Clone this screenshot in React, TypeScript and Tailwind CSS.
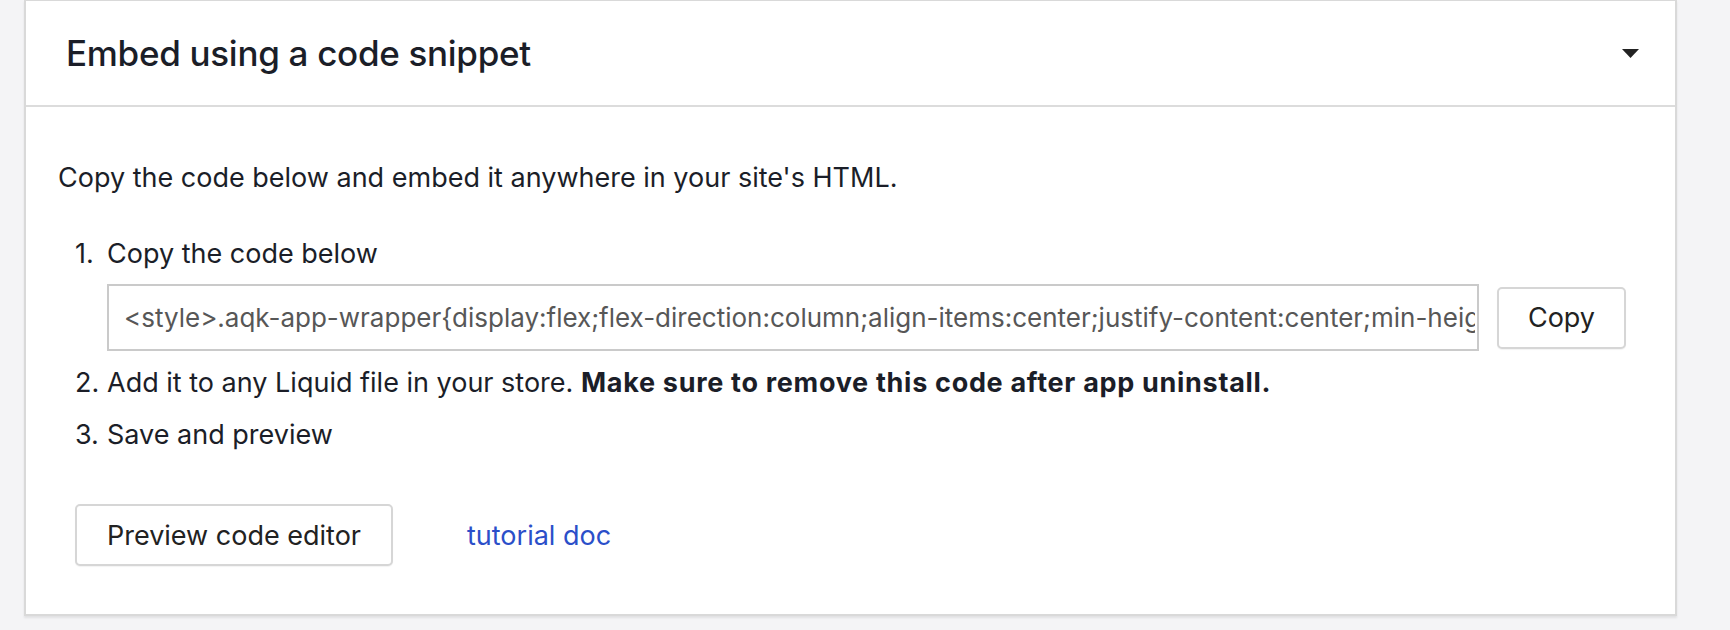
import React from "react";

export default function App() {
  const code =
    '<style>.aqk-app-wrapper{display:flex;flex-direction:column;align-items:center;justify-content:center;min-height:100%;width:100%}</style><div class="aqk-app-wrapper"></div>';
  return (
    <div
      className="min-h-[630px] w-full bg-[#f4f4f6] pl-[24px] text-[#1b1e28]"
      style={{ fontFamily: "Inter, 'Noto Sans', sans-serif" }}
    >
      <div className="w-[1653px] border-2 border-t border-[#d9d9d9] bg-white shadow-[0_2px_2px_rgba(0,0,0,0.08)]">
        <div className="flex h-[106px] items-center justify-between border-b-2 border-[#dcdcdc] pl-[40px] pr-[36px]">
          <h2 className="text-[35px] font-medium leading-none tracking-[-0.3px]">
            Embed using a code snippet
          </h2>
          <svg width="17" height="9" viewBox="0 0 17 9" className="mt-[1px]">
            <path d="M0 0 H17 L8.5 9 Z" fill="#222" />
          </svg>
        </div>
        <div className="pb-[48px] pl-[32px] pr-[48px] pt-[52px] text-[27px] leading-[37px]">
          <p>Copy the code below and embed it anywhere in your site's HTML.</p>
          <ol className="mt-[39px] pl-[17px]">
            <li className="flex">
              <span className="w-[32px] shrink-0">1.</span>
              <div className="flex-1">
                <div>Copy the code below</div>
                <div className="mt-[12px] flex items-center gap-[18px]">
                  <input
                    readOnly
                    value={code}
                    className="h-[67px] w-[1372px] border-2 border-[#cacaca] bg-white pl-[15px] pr-[2px] text-[26px] text-[#575757] outline-none"
                    style={{ fontFamily: "Inter, 'Noto Sans', sans-serif" }}
                  />
                  <button className="h-[62px] w-[129px] rounded-[5px] border-2 border-[#d6d6d6] bg-white text-[#222] shadow-[0_1px_1px_rgba(0,0,0,0.05)]">
                    Copy
                  </button>
                </div>
              </div>
            </li>
            <li className="mt-[13px] flex">
              <span className="w-[32px] shrink-0">2.</span>
              <span>
                Add it to any Liquid file in your store.{" "}
                <strong className="font-bold tracking-[0.7px]">
                  Make sure to remove this code after app uninstall.
                </strong>
              </span>
            </li>
            <li className="mt-[15px] flex">
              <span className="w-[32px] shrink-0">3.</span>
              <span>Save and preview</span>
            </li>
          </ol>
          <div className="mt-[51px] flex items-center pl-[17px]">
            <button className="h-[62px] w-[318px] rounded-[5px] border-2 border-[#d6d6d6] bg-white text-[#222] shadow-[0_1px_1px_rgba(0,0,0,0.05)]">
              Preview code editor
            </button>
            <a className="ml-[74px] text-[#2b4fc9]" href="#">
              tutorial doc
            </a>
          </div>
        </div>
      </div>
    </div>
  );
}
